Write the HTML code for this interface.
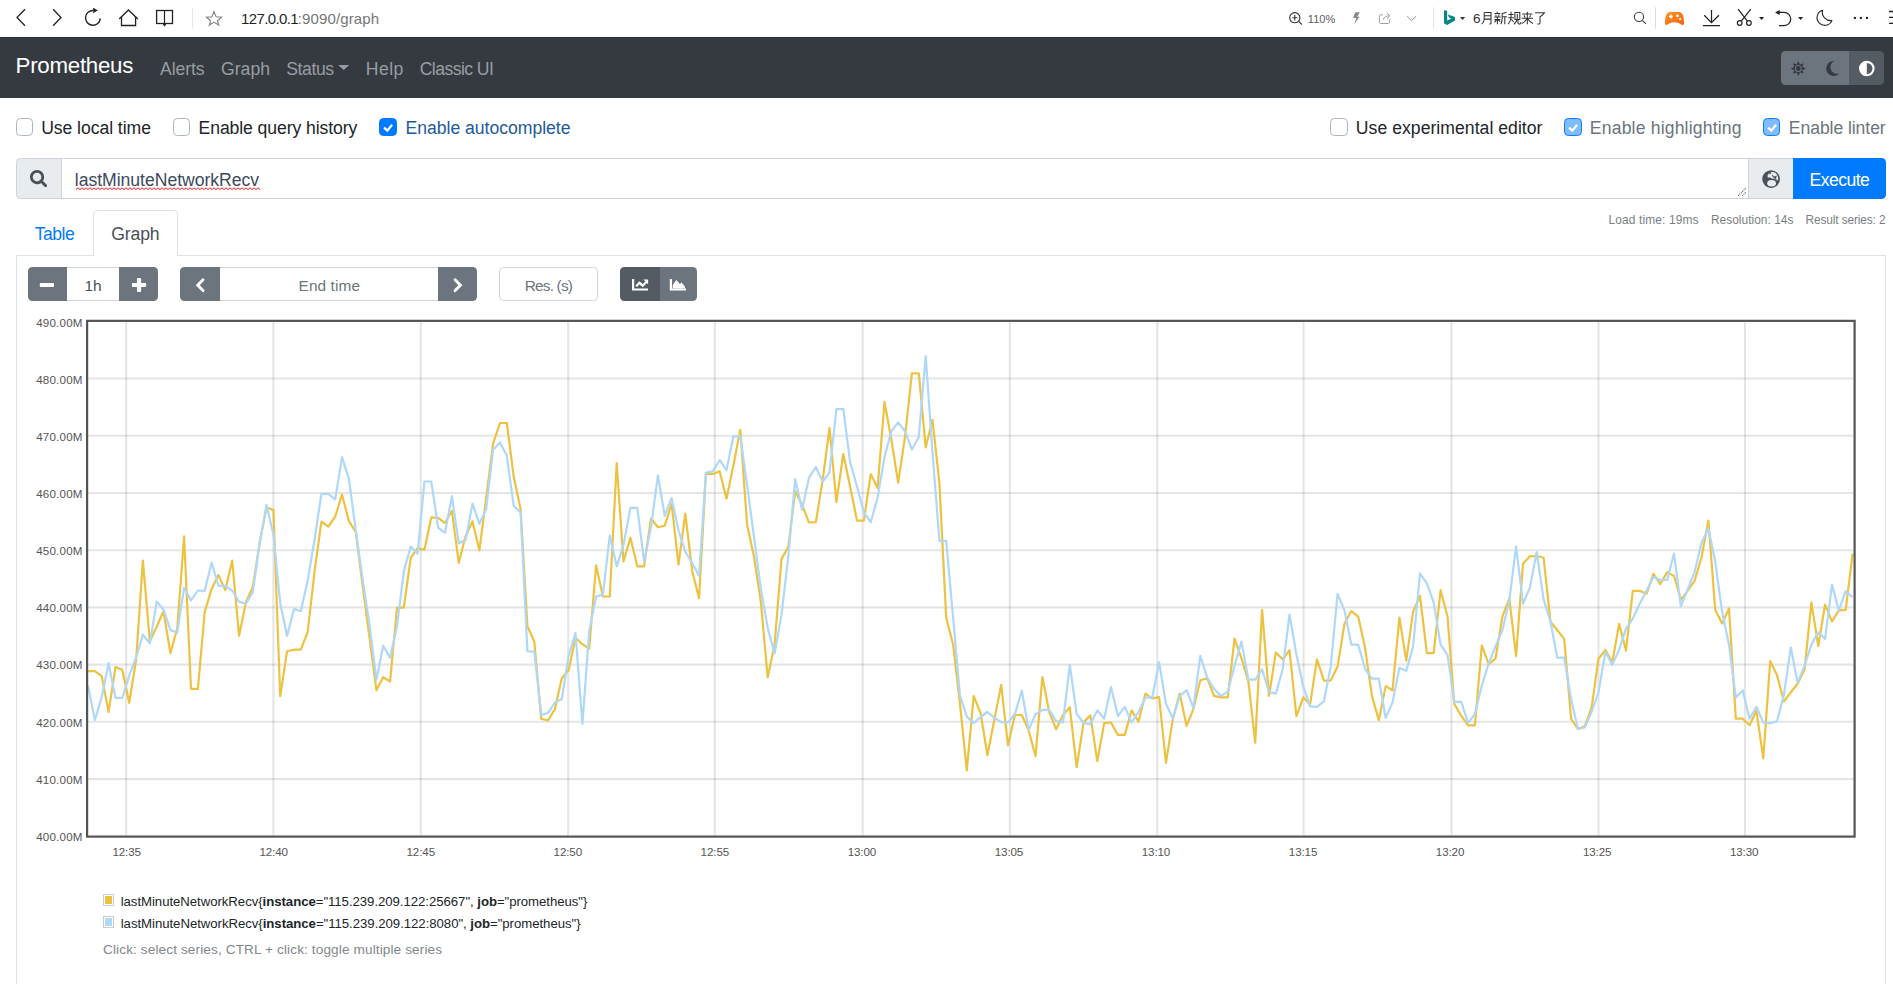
<!DOCTYPE html>
<html lang="en">
<head>
<meta charset="utf-8">
<title>Prometheus Time Series Collection and Processing Server</title>
<style>
html,body{margin:0;padding:0;background:#fff;}
body{width:1893px;height:984px;overflow:hidden;position:relative;font-family:"Liberation Sans",sans-serif;}
.abs{position:absolute;}
.t{position:absolute;white-space:nowrap;line-height:1;font-family:"Liberation Sans",sans-serif;}
.t b{font-weight:bold;}
#chrome{position:absolute;left:0;top:0;width:1893px;height:37px;background:#fff;}
#navbar{position:absolute;left:0;top:37px;width:1893px;height:60.6px;background:#343a40;}
.cb{position:absolute;top:118px;width:18px;height:18px;box-sizing:border-box;border:1px solid #adb5bd;border-radius:4.4px;background:#fff;}
.cb.on{background:#007bff;border-color:#007bff;}
.cb.dis{background:#80bdff;border-color:#0a80ff;}
.btn{position:absolute;background:#6c757d;box-sizing:border-box;}
.btn.act{background:#545b62;}
.inp{position:absolute;background:#fff;box-sizing:border-box;border:1px solid #ced4da;}
</style>
</head>
<body>

<!-- ================= browser chrome ================= -->
<div id="chrome">
<svg class="abs" style="left:0;top:0" width="1893" height="37" viewBox="0 0 1893 37" fill="none">
  <!-- back / forward -->
  <polyline points="25,9.2 17,17.5 25,25.800" stroke="#222" stroke-width="1.3"/>
  <polyline points="53.1,9.2 61,17.5 53.1,25.800" stroke="#222" stroke-width="1.3"/>
  <!-- reload -->
  <path d="M100.3 18.4A7.4 7.4 0 1 1 93.4 10.45" stroke="#222" stroke-width="1.4"/>
  <path d="M93.1 7.7L97.800 10.3L93.3 13.2Z" fill="#222"/>
  <!-- home -->
  <polyline points="119.2,19 128.45,10 137.800,19" stroke="#222" stroke-width="1.3"/>
  <polyline points="121.5,16.8 121.5,25.5 135.6,25.5 135.6,16.8" stroke="#222" stroke-width="1.3"/>
  <!-- reading view (book) -->
  <rect x="156.6" y="10.5" width="15.9" height="13" stroke="#222" stroke-width="1.3"/>
  <path d="M164.5 10.5V25.7M163.3 24L164.5 25.700L165.700 24" stroke="#222" stroke-width="1.2"/>
  <!-- divider -->
  <path d="M192.5 7.3V28.7" stroke="#e8e8e8" stroke-width="1"/>
  <!-- star -->
  <path d="M214 11.6L216.1 16.7L221.6 17.1L217.4 20.7L218.7 25.1L214 22.1L209.3 25.1L210.6 20.7L206.4 17.1L211.9 16.7Z" stroke="#858585" stroke-width="1.15"/>
  <!-- zoom magnifier -->
  <circle cx="1294.8" cy="17.7" r="5.1" stroke="#333" stroke-width="1.1"/>
  <path d="M1298.6 21.4L1301.8 24.5M1292.3 17.7H1297.3M1294.8 15.1V20.4" stroke="#333" stroke-width="1.1"/>
  <!-- lightning -->
  <path d="M1355.2 12.2H1359.9L1357.3 16.7H1359.6L1354.2 24.3L1356.3 17.9H1353.1Z" fill="#8c8c8c"/>
  <!-- share -->
  <path d="M1383 14.8H1380.6Q1379.4 14.8 1379.4 16V22.3Q1379.4 23.5 1380.6 23.5H1388.4Q1389.6 23.5 1389.6 22.3V19.6" stroke="#a0a0a0" stroke-width="1"/>
  <path d="M1383.3 19.8Q1383.8 15.9 1389.6 15.8M1387 13.1L1389.9 15.8L1387 18.6" stroke="#a0a0a0" stroke-width="1"/>
  <!-- chevron down -->
  <polyline points="1407.2,16.4 1411.5,20.7 1415.9,16.4" stroke="#8c8c8c" stroke-width="1"/>
  <!-- divider -->
  <path d="M1433.5 7.3V28.7" stroke="#e3e3e3" stroke-width="1"/>
  <!-- bing -->
  <path d="M1444 10L1447.2 11.1V20.6L1451.3 18.4L1449 17.4L1447.9 14.5L1455 17V20.6L1447.2 25L1444 23.2Z" fill="#0c8484"/>
  <path d="M1460 17.1H1465.2L1462.6 20Z" fill="#333"/>
  <!-- CJK text drawn as strokes: 月新规来了 -->
  <g stroke="#333" stroke-width="1.05" fill="none">
    <!-- 月 -->
    <path d="M1484.2 12.4H1491V23.2Q1491 24 1489.4 23.9M1484.2 12.4V19.5Q1484 22.6 1481.6 24M1484.2 15.7H1491M1484.2 19.1H1491"/>
    <!-- 新 -->
    <path d="M1497.2 11.8V13.2M1494.4 13.5H1500.4M1495.7 14.6L1496.3 16.4M1499.2 14.4L1498.5 16.4M1494.2 17H1500.6M1497.4 17V24.2M1497.2 19.2L1494.4 22.4M1497.6 19.4L1500.2 21.6M1494.4 19.6H1500.4"/>
    <path d="M1506.4 12.2Q1504.4 13.2 1502.2 13.5V18Q1502.2 22 1500.8 24.2M1502.2 16.8H1506.8M1504.8 16.8V24.3"/>
    <!-- 规 -->
    <path d="M1508.4 14.4H1513.6M1508.2 17.8H1513.8M1511 11.8V17.8Q1510.6 21.6 1508.2 24.1M1511.4 19.4L1513.6 22"/>
    <path d="M1514.9 12.5H1519.8V19.4H1514.9ZM1517.3 14V18Q1517 22 1513.9 24.2M1518 19.6V23Q1518 23.9 1519 23.9H1520.2Q1520.8 23.8 1520.9 22"/>
    <!-- 来 -->
    <path d="M1522.3 14H1532.4M1527.3 11.8V24.3M1524 15.3L1525 17.4M1530.6 15.2L1529.6 17.4M1521.6 18.3H1533.1M1527 18.6Q1525 22 1521.7 23.6M1527.6 18.6Q1529.6 22 1533 23.5"/>
    <!-- 了 -->
    <path d="M1535.2 12.8H1544.3Q1542.4 15.2 1540 16.8V22.9Q1540 24 1538.6 24H1537.3"/>
  </g>
  <!-- search -->
  <circle cx="1638.95" cy="16.9" r="4.6" stroke="#3a3a3a" stroke-width="1.1"/>
  <path d="M1642.3 20.3L1645.9 23.8" stroke="#3a3a3a" stroke-width="1.1"/>
  <path d="M1655.5 7.3V28.7" stroke="#dadada" stroke-width="1"/>
  <!-- gamepad -->
  <defs><linearGradient id="gp" x1="0" y1="0" x2="1" y2="1"><stop offset="0" stop-color="#fb9222"/><stop offset="1" stop-color="#f86512"/></linearGradient></defs>
  <path d="M1669.8 11.9H1679.7Q1682.3 12.6 1683.4 16.4L1684.2 22.5Q1684.3 25 1682.6 25Q1681.2 25 1679.6 23.6Q1674.5 21 1669.4 23.6Q1667.8 25 1666.4 25Q1664.7 25 1664.800 22.5L1665.6 16.4Q1666.8 12.6 1669.8 11.9Z" fill="url(#gp)"/>
  <path d="M1669 16.5H1673M1671 14.5V18.5" stroke="#fff" stroke-width="1.5"/>
  <circle cx="1677.5" cy="15.9" r="1.35" fill="#fff"/><rect x="1679.2" y="18.1" width="1.9" height="1.9" fill="#fff"/>
  <!-- download -->
  <path d="M1711.5 10V22.4M1704.2 15.2L1711.5 22.6L1718.9 15.2M1702.9 25.55H1720" stroke="#222" stroke-width="1.25"/>
  <!-- scissors -->
  <path d="M1738.1 9.1L1747.2 20.9M1750.8 9.1L1741.5 20.9" stroke="#222" stroke-width="1.25"/>
  <circle cx="1739.7" cy="23" r="2.3" stroke="#222" stroke-width="1.2"/><circle cx="1748.9" cy="23" r="2.3" stroke="#222" stroke-width="1.2"/>
  <path d="M1759 17H1764.1L1761.55 19.9Z" fill="#222"/>
  <!-- undo -->
  <path d="M1779 12.45H1784.2A6.55 6.55 0 0 1 1784.2 25.55H1779" stroke="#222" stroke-width="1.25"/>
  <path d="M1775 12.45L1779.7 9.9V15Z" fill="#222"/>
  <path d="M1798 17H1803.1L1800.55 19.9Z" fill="#222"/>
  <!-- moon -->
  <path d="M1822.5 10.3A7.7 7.7 0 1 0 1831.9 20.6A8.6 8.6 0 0 1 1822.5 10.3Z" stroke="#2a2a2a" stroke-width="1.15" stroke-linejoin="round"/>
  <!-- more -->
  <rect x="1853.8" y="16.9" width="2.1" height="2.1" fill="#222"/><rect x="1859.8" y="16.9" width="2.1" height="2.1" fill="#222"/><rect x="1865.9" y="16.9" width="2.1" height="2.1" fill="#222"/>
  <!-- hamburger (clipped) -->
  <path d="M1889 11.5H1893M1889 17.45H1893M1889 23.35H1893" stroke="#222" stroke-width="1.3"/>
</svg>
</div>

<!-- ================= Prometheus navbar ================= -->
<div id="navbar">
  <div class="abs" style="left:0;top:0;width:1893px;height:1px;background:#2b3037;"></div>
  <!-- dropdown caret -->
  <svg class="abs" style="left:338px;top:27.3px" width="12" height="8" viewBox="0 0 12 8"><path d="M0.2 1H11.2L5.7 6Z" fill="#9a9da0"/></svg>
  <!-- theme toggle group -->
  <div class="abs" style="left:1781px;top:14px;width:68.2px;height:34px;background:#6c757d;border-radius:4.4px 0 0 4.4px;"></div>
  <div class="abs" style="left:1849.2px;top:14px;width:34.8px;height:34px;background:#545b62;border-radius:0 4.4px 4.4px 0;"></div>
  <svg class="abs" style="left:1781px;top:14px" width="103" height="34" viewBox="1781 51 103 34">
    <!-- sun -->
    <g fill="#343a40">
      <path d="M1798.3 61L1800 64.4L1803.6 63.2L1802.4 66.8L1805.8 68.5L1802.4 70.2L1803.6 73.8L1800 72.6L1798.3 76L1796.6 72.6L1793 73.8L1794.2 70.2L1790.8 68.5L1794.2 66.8L1793 63.2L1796.6 64.4Z"/>
    </g>
    <circle cx="1798.3" cy="68.5" r="3.5" fill="#6c757d"/>
    <circle cx="1798.3" cy="68.5" r="2.4" fill="#343a40"/>
    <!-- moon -->
    <path d="M1834.6 61A7.5 7.5 0 1 0 1839.4 73.4A6.4 6.4 0 0 1 1834.6 61Z" fill="#343a40"/>
    <!-- adjust (half circle) -->
    <circle cx="1866.8" cy="68.5" r="7.8" fill="#fff"/>
    <path d="M1866.8 62.9A5.6 5.6 0 0 1 1866.8 74.1Z" fill="#545b62"/>
  </svg>
</div>

<!-- ================= options row ================= -->
<div class="cb" style="left:16px;width:17px"></div>
<div class="cb" style="left:173px;width:17px"></div>
<div class="cb on" style="left:379px"><svg class="abs" style="left:-1px;top:-1px" width="18" height="18" viewBox="0 0 18 18"><path d="M5.1 9.6L8.3 12.6L13.1 6.7" stroke="#fff" stroke-width="2.2" fill="none"/></svg></div>
<div class="cb" style="left:1330px"></div>
<div class="cb dis" style="left:1564px"><svg class="abs" style="left:-1px;top:-1px" width="18" height="18" viewBox="0 0 18 18"><path d="M5.1 9.6L8.3 12.6L13.1 6.7" stroke="#fff" stroke-width="2.2" fill="none"/></svg></div>
<div class="cb dis" style="left:1763px;width:17px"><svg class="abs" style="left:-1px;top:-1px" width="18" height="18" viewBox="0 0 18 18"><path d="M5.1 9.6L8.3 12.6L13.1 6.7" stroke="#fff" stroke-width="2.2" fill="none"/></svg></div>

<!-- ================= query input group ================= -->
<div class="abs" style="left:16px;top:158.3px;width:46px;height:40.4px;box-sizing:border-box;background:#e9ecef;border:1px solid #ced4da;border-radius:4.4px 0 0 4.4px;"></div>
<svg class="abs" style="left:30px;top:169.6px" width="17.4" height="17.4" viewBox="0 0 512 512"><path fill="#495057" d="M505 442.7L405.3 343c-4.500-4.500-10.600-7-17-7H372c27.600-35.300 44-79.700 44-128C416 93.100 322.900 0 208 0S0 93.100 0 208s93.100 208 208 208c48.300 0 92.700-16.400 128-44v16.300c0 6.400 2.500 12.500 7 17l99.700 99.700c9.400 9.400 24.600 9.400 33.900 0l28.300-28.300c9.400-9.400 9.400-24.600 .1-34zM208 336c-70.700 0-128-57.200-128-128 0-70.700 57.200-128 128-128 70.700 0 128 57.200 128 128 0 70.700-57.200 128-128 128z"/></svg>
<div class="abs" style="left:61px;top:158.3px;width:1688px;height:40.4px;box-sizing:border-box;background:#fff;border:1px solid #ced4da;"></div>
<!-- spellcheck squiggle -->
<svg class="abs" style="left:75.5px;top:187.3px" width="185" height="4" viewBox="0 0 185 4"><path d="M0 2.6L2 0.8L4 2.6L6 0.8L8 2.6L10 0.8L12 2.6L14 0.8L16 2.6L18 0.8L20 2.6L22 0.8L24 2.6L26 0.8L28 2.6L30 0.8L32 2.6L34 0.8L36 2.6L38 0.8L40 2.6L42 0.8L44 2.6L46 0.8L48 2.6L50 0.8L52 2.6L54 0.8L56 2.6L58 0.8L60 2.6L62 0.8L64 2.6L66 0.8L68 2.6L70 0.8L72 2.6L74 0.8L76 2.6L78 0.8L80 2.6L82 0.8L84 2.6L86 0.8L88 2.6L90 0.8L92 2.6L94 0.8L96 2.6L98 0.8L100 2.6L102 0.8L104 2.6L106 0.8L108 2.6L110 0.8L112 2.6L114 0.8L116 2.6L118 0.8L120 2.6L122 0.8L124 2.6L126 0.8L128 2.6L130 0.8L132 2.6L134 0.8L136 2.6L138 0.8L140 2.6L142 0.8L144 2.6L146 0.8L148 2.6L150 0.8L152 2.6L154 0.8L156 2.6L158 0.8L160 2.6L162 0.8L164 2.6L166 0.8L168 2.6L170 0.8L172 2.6L174 0.8L176 2.6L178 0.8L180 2.6L182 0.8L184 2.6" stroke="#ff1a1a" stroke-width="1" fill="none"/></svg>
<!-- resize grip -->
<svg class="abs" style="left:1737px;top:187px" width="11" height="10" viewBox="0 0 11 10"><path d="M1.2 8.800L9 1.1M5.300 8.800L9 5.100" stroke="#5f5f5f" stroke-width="1.1" stroke-dasharray="1.100 0.800"/></svg>
<div class="abs" style="left:1748.3px;top:158.3px;width:45px;height:40.4px;box-sizing:border-box;background:#e9ecef;border:1px solid #ced4da;border-right:none;"></div>
<!-- globe -->
<svg class="abs" style="left:1762px;top:169.8px" width="18.2" height="18.2" viewBox="-9.1 -9.1 18.2 18.2">
  <circle cx="0" cy="0" r="8.85" fill="#495057"/>
  <path d="M-3.7 -3.3Q-2.9 -5.9 0.3 -7.2Q4 -7.6 5.9 -4.600Q7.5 -1.800 7.2 0.700L5.6 1.5L3.3 -0.3L0.600 -0.5L-1 -1.700L-3.300 -1.500Z" fill="#e9ecef"/>
  <ellipse cx="0.5" cy="4.2" rx="4.4" ry="3.25" fill="#e9ecef"/>
  <path d="M-1.700 -5L0 -6.200M1.200 -4L2.600 -1.900L5 -2.700L4 -0.800L5.400 0.400" stroke="#495057" stroke-width="1.1" fill="none"/>
</svg>
<div class="abs" style="left:1793px;top:158.3px;width:93.2px;height:40.4px;background:#007bff;border-radius:0 4.4px 4.4px 0;"></div>

<!-- ================= tabs + panel ================= -->
<div class="abs" style="left:16px;top:255px;width:1870px;height:740px;box-sizing:border-box;border:1px solid #dee2e6;border-bottom:none;"></div>
<div class="abs" style="left:93px;top:210px;width:85px;height:46px;box-sizing:border-box;border:1px solid #dee2e6;border-bottom:none;border-radius:4.4px 4.4px 0 0;background:#fff;"></div>

<!-- range controls -->
<div class="btn" style="left:28.2px;top:267.1px;width:38.8px;height:33.8px;border-radius:4.4px 0 0 4.4px;"></div>
<div class="inp" style="left:67px;top:267.1px;width:52.2px;height:33.8px;border-left:none;border-right:none;"></div>
<div class="btn" style="left:119.2px;top:267.1px;width:38.6px;height:33.8px;border-radius:0 4.4px 4.4px 0;"></div>
<svg class="abs" style="left:28px;top:267px" width="131" height="34" viewBox="28 267 131 34">
  <rect x="39.8" y="282.9" width="14.2" height="4.2" rx="1" fill="#fff"/>
  <rect x="131.9" y="282.9" width="14.3" height="4.2" rx="1" fill="#fff"/><rect x="136.95" y="278" width="4.2" height="14.1" rx="1" fill="#fff"/>
</svg>

<!-- end-time controls -->
<div class="btn" style="left:180.1px;top:267.1px;width:39.8px;height:33.8px;border-radius:4.4px 0 0 4.4px;"></div>
<div class="inp" style="left:219.9px;top:267.1px;width:218px;height:33.8px;border-left:none;border-right:none;"></div>
<div class="btn" style="left:437.9px;top:267.1px;width:39px;height:33.8px;border-radius:0 4.4px 4.4px 0;"></div>
<svg class="abs" style="left:180px;top:267px" width="298" height="34" viewBox="180 267 298 34">
  <polyline points="203,279.700 197.700,285.15 203,290.600" stroke="#fff" stroke-width="2.9" fill="none" stroke-linecap="round" stroke-linejoin="miter"/>
  <polyline points="455.100,279.700 460.400,285.15 455.100,290.600" stroke="#fff" stroke-width="2.9" fill="none" stroke-linecap="round" stroke-linejoin="miter"/>
</svg>

<!-- resolution input -->
<div class="inp" style="left:499.4px;top:267.1px;width:98.4px;height:33.8px;border-radius:4.4px;"></div>

<!-- chart type buttons -->
<div class="btn act" style="left:619.8px;top:267.1px;width:40px;height:33.8px;border-radius:4.4px 0 0 4.4px;"></div>
<div class="btn" style="left:659.8px;top:267.1px;width:37.2px;height:33.8px;border-radius:0 4.4px 4.4px 0;"></div>
<svg class="abs" style="left:620px;top:267px" width="78" height="34" viewBox="620 267 78 34">
  <!-- line chart icon -->
  <path d="M633.1 279V289.500H648" stroke="#fff" stroke-width="2.2" fill="none"/>
  <polyline points="636.2,286.2 639.400,282.800 642.800,285.700 646.500,281.700" stroke="#fff" stroke-width="2.4" fill="none"/>
  <path d="M643.4 279.5H648.1V284.2Z" fill="#fff"/>
  <!-- area chart icon -->
  <path d="M670.900 279V289.500H686" stroke="#fff" stroke-width="2.2" fill="none"/>
  <path d="M672.700 288.4V284.900L676.300 280L679.900 284L681.600 282.500L685 286.700V288.4Z" fill="#fff"/>
</svg>

<!-- ================= chart ================= -->
<svg class="abs" style="left:0;top:300px" width="1893" height="560" viewBox="0 300 1893 560">
<path d="M126.2 322.0V835.5M273.4 322.0V835.5M420.8 322.0V835.5M568.2 322.0V835.5M714.8 322.0V835.5M862.7 322.0V835.5M1009.9 322.0V835.5M1157.3 322.0V835.5M1303.6 322.0V835.5M1451.5 322.0V835.5M1598.5 322.0V835.5M1745.0 322.0V835.5" stroke="rgba(0,0,0,0.1)" stroke-width="2.1" fill="none"/>
<path d="M88.0 378.5H1853.5M88.0 435.7H1853.5M88.0 493.0H1853.5M88.0 550.2H1853.5M88.0 607.4H1853.5M88.0 664.6H1853.5M88.0 721.8H1853.5M88.0 779.1H1853.5" stroke="rgba(0,0,0,0.1)" stroke-width="2.1" fill="none"/>
<polyline points="88.0,671.1 94.9,671.1 101.7,676.1 108.6,712.0 115.5,667.1 122.3,669.7 129.2,702.8 136.1,660.0 142.9,560.6 149.8,641.2 156.7,626.7 163.5,611.3 170.4,653.1 177.3,628.0 184.1,536.3 191.0,688.8 197.9,688.8 204.7,612.1 211.6,588.9 218.5,575.1 225.3,590.2 232.2,560.6 239.1,635.9 245.9,602.1 252.8,587.0 259.6,543.4 266.5,507.7 273.4,509.9 280.2,696.2 287.1,651.2 294.0,649.7 300.8,649.7 307.7,632.0 314.6,571.2 321.4,521.6 328.3,526.7 335.2,516.6 342.0,494.5 348.9,521.2 355.8,531.9 362.6,585.6 369.5,637.6 376.4,690.2 383.2,677.2 390.1,681.5 397.0,607.7 403.8,607.7 410.7,557.9 417.6,548.2 424.4,549.8 431.3,517.3 438.2,517.9 445.0,523.1 451.9,510.8 458.8,562.8 465.6,536.1 472.5,521.2 479.4,550.4 486.2,497.8 493.1,443.5 500.0,423.0 506.8,423.0 513.7,476.6 520.6,509.2 527.4,626.2 534.3,641.5 541.2,718.8 548.0,720.5 554.9,709.1 561.8,678.3 568.6,670.2 575.5,637.8 582.4,644.3 589.2,648.5 596.1,565.3 602.9,596.5 609.8,596.5 616.7,463.2 623.5,561.4 630.4,537.7 637.3,566.3 644.1,566.3 651.0,518.5 657.9,527.3 664.7,525.7 671.6,503.9 678.5,564.7 685.3,513.6 692.2,571.2 699.1,598.2 705.9,474.0 712.8,474.0 719.7,471.4 726.5,498.7 733.4,465.5 740.3,429.8 747.1,524.7 754.0,556.5 760.9,602.1 767.7,677.5 774.6,644.3 781.5,559.1 788.3,546.8 795.2,490.9 802.1,504.8 808.9,522.3 815.8,522.2 822.7,480.0 829.5,427.9 836.4,502.1 843.3,453.9 850.1,486.5 857.0,520.6 863.9,520.6 870.7,474.1 877.6,488.1 884.5,401.9 891.3,439.3 898.2,482.6 905.1,436.1 911.9,373.3 918.8,373.3 925.7,447.4 932.5,419.8 939.4,483.2 946.2,617.8 953.1,644.5 960.0,703.8 966.8,770.5 973.7,696.1 980.6,713.0 987.4,755.2 994.3,720.1 1001.2,684.9 1008.0,745.5 1014.9,715.0 1021.8,715.0 1028.6,730.2 1035.5,756.3 1042.4,677.0 1049.2,712.0 1056.1,729.2 1063.0,715.0 1069.8,707.3 1076.7,767.2 1083.6,722.1 1090.4,715.4 1097.3,761.1 1104.2,723.1 1111.0,722.5 1117.9,734.9 1124.8,734.9 1131.6,710.3 1138.5,721.7 1145.4,693.7 1152.2,698.3 1159.1,697.1 1166.0,762.8 1172.8,719.1 1179.7,693.5 1186.6,725.9 1193.4,709.1 1200.3,680.2 1207.2,678.2 1214.0,695.9 1220.9,697.3 1227.8,697.3 1234.6,638.5 1241.5,658.3 1248.4,681.6 1255.2,742.6 1262.1,609.9 1269.0,695.9 1275.8,652.6 1282.7,659.3 1289.5,650.1 1296.4,716.2 1303.3,697.3 1310.1,704.4 1317.0,659.3 1323.9,680.6 1330.7,680.6 1337.6,666.4 1344.5,623.7 1351.3,611.1 1358.2,616.6 1365.1,648.1 1371.9,695.9 1378.8,720.2 1385.7,686.1 1392.5,690.4 1399.4,617.6 1406.3,660.7 1413.1,611.8 1420.0,595.8 1426.9,653.2 1433.7,653.2 1440.6,590.2 1447.5,616.5 1454.3,704.0 1461.2,715.7 1468.1,725.3 1474.9,725.3 1481.8,645.3 1488.7,664.1 1495.5,658.7 1502.4,616.5 1509.3,598.7 1516.1,656.0 1523.0,563.7 1529.9,556.3 1536.7,556.0 1543.6,557.8 1550.5,621.8 1557.3,630.3 1564.2,638.9 1571.1,718.9 1577.9,729.0 1584.8,726.4 1591.7,707.2 1598.5,658.7 1605.4,650.0 1612.3,662.4 1619.1,623.9 1626.0,650.6 1632.8,590.8 1639.7,590.8 1646.6,593.7 1653.4,573.8 1660.3,584.1 1667.2,572.1 1674.0,576.0 1680.9,599.8 1687.8,590.6 1694.6,580.8 1701.5,557.5 1708.4,520.6 1715.2,609.8 1722.1,623.6 1729.0,608.5 1735.8,718.7 1742.7,718.7 1749.6,725.3 1756.4,710.7 1763.3,758.3 1770.2,661.1 1777.0,675.1 1783.9,701.5 1790.8,692.3 1797.6,683.8 1804.5,669.8 1811.4,602.4 1818.2,646.0 1825.1,604.6 1832.0,621.5 1838.8,610.4 1845.7,609.8 1852.6,553.6" fill="none" stroke="#edc240" stroke-width="2.2" stroke-linejoin="round"/>
<polyline points="88.0,685.6 94.9,720.0 101.7,697.2 108.6,663.1 115.5,698.0 122.3,698.0 129.2,675.6 136.1,657.6 142.9,634.6 149.8,643.3 156.7,601.6 163.5,609.5 170.4,630.1 177.3,632.5 184.1,587.8 191.0,600.5 197.9,590.5 204.7,591.0 211.6,562.5 218.5,585.7 225.3,586.2 232.2,590.5 239.1,601.6 245.9,603.7 252.8,592.3 259.6,543.4 266.5,505.1 273.4,534.2 280.2,602.9 287.1,635.9 294.0,609.0 300.8,611.3 307.7,580.4 314.6,539.5 321.4,493.8 328.3,493.8 335.2,499.4 342.0,457.1 348.9,478.9 355.8,530.3 362.6,579.1 369.5,624.6 376.4,679.8 383.2,645.7 390.1,657.7 397.0,626.2 403.8,571.6 410.7,546.5 417.6,553.7 424.4,481.5 431.3,481.5 438.2,527.7 445.0,532.9 451.9,496.2 458.8,543.3 465.6,540.0 472.5,503.6 479.4,523.8 486.2,509.2 493.1,449.7 500.0,442.5 506.8,455.5 513.7,505.9 520.6,512.4 527.4,651.5 534.3,651.5 541.2,714.9 548.0,713.0 554.9,702.6 561.8,699.1 568.6,655.6 575.5,632.9 582.4,724.0 589.2,631.3 596.1,596.5 602.9,594.6 609.8,535.4 616.7,566.3 623.5,545.2 630.4,507.8 637.3,507.8 644.1,561.4 651.0,527.3 657.9,475.3 664.7,515.9 671.6,498.0 678.5,530.5 685.3,551.7 692.2,563.0 699.1,576.0 705.9,472.7 712.8,471.4 719.7,460.0 726.5,470.4 733.4,436.3 740.3,436.3 747.1,485.0 754.0,537.0 760.9,589.1 767.7,628.1 774.6,653.4 781.5,615.1 788.3,556.5 795.2,479.2 802.1,509.8 808.9,477.9 815.8,467.0 822.7,481.6 829.5,472.5 836.4,409.1 843.3,409.1 850.1,462.1 857.0,486.5 863.9,512.5 870.7,522.2 877.6,497.8 884.5,457.2 891.3,431.2 898.2,422.4 905.1,431.2 911.9,449.7 918.8,437.0 925.7,356.4 932.5,452.3 939.4,540.8 946.2,540.8 953.1,617.7 960.0,695.7 966.8,716.6 973.7,723.1 980.6,717.0 987.4,712.0 994.3,717.6 1001.2,722.1 1008.0,722.5 1014.9,714.0 1021.8,690.6 1028.6,729.8 1035.5,714.4 1042.4,709.9 1049.2,709.9 1056.1,721.1 1063.0,722.5 1069.8,664.8 1076.7,714.0 1083.6,723.1 1090.4,724.1 1097.3,710.5 1104.2,718.7 1111.0,687.0 1117.9,716.0 1124.8,706.9 1131.6,722.5 1138.5,712.0 1145.4,697.7 1152.2,697.7 1159.1,662.2 1166.0,703.8 1172.8,718.4 1179.7,696.0 1186.6,690.2 1193.4,708.0 1200.3,655.8 1207.2,677.6 1214.0,688.7 1220.9,695.9 1227.8,691.8 1234.6,665.4 1241.5,641.6 1248.4,679.6 1255.2,679.6 1262.1,669.4 1269.0,691.8 1275.8,693.8 1282.7,669.4 1289.5,614.6 1296.4,654.2 1303.3,686.7 1310.1,706.4 1317.0,707.0 1323.9,701.3 1330.7,666.4 1337.6,593.8 1344.5,610.5 1351.3,644.6 1358.2,644.6 1365.1,668.8 1371.9,678.6 1378.8,678.6 1385.7,717.8 1392.5,702.6 1399.4,667.8 1406.3,670.9 1413.1,646.2 1420.0,573.3 1426.9,583.4 1433.7,602.6 1440.6,644.6 1447.5,654.9 1454.3,701.9 1461.2,701.9 1468.1,722.8 1474.9,714.0 1481.8,685.8 1488.7,663.4 1495.5,646.4 1502.4,630.3 1509.3,600.5 1516.1,546.4 1523.0,603.7 1529.9,587.6 1536.7,552.0 1543.6,599.4 1550.5,621.8 1557.3,657.7 1564.2,657.7 1571.1,698.7 1577.9,729.0 1584.8,727.5 1591.7,711.5 1598.5,692.3 1605.4,652.1 1612.3,664.9 1619.1,649.6 1626.0,628.6 1632.8,618.6 1639.7,603.7 1646.6,590.8 1653.4,576.9 1660.3,580.1 1667.2,580.0 1674.0,553.6 1680.9,606.4 1687.8,589.2 1694.6,572.1 1701.5,543.0 1708.4,528.5 1715.2,561.5 1722.1,611.7 1729.0,644.7 1735.8,697.5 1742.7,690.4 1749.6,718.7 1756.4,706.8 1763.3,722.6 1770.2,723.2 1777.0,721.3 1783.9,694.9 1790.8,647.3 1797.6,683.0 1804.5,665.8 1811.4,644.7 1818.2,632.3 1825.1,638.9 1832.0,584.5 1838.8,610.4 1845.7,591.1 1852.6,597.2" fill="none" stroke="#afd8f8" stroke-width="2.2" stroke-linejoin="round"/>
<rect x="87.1" y="320.85" width="1767.5" height="515.75" fill="none" stroke="#545454" stroke-width="2.2"/>
</svg>

<!-- ================= legend ================= -->
<div class="abs" style="left:103px;top:894px;width:11px;height:12px;box-sizing:border-box;border:1px solid #ccc;background:#fff;"><div class="abs" style="left:1px;top:1px;width:7px;height:8px;background:#edc240;"></div></div>
<div class="abs" style="left:103px;top:916px;width:11px;height:12px;box-sizing:border-box;border:1px solid #ccc;background:#fff;"><div class="abs" style="left:1px;top:1px;width:7px;height:8px;background:#afd8f8;"></div></div>

<!-- ================= text ================= -->
<span class="t" id="t0" style="left:241.06px;top:11.00px;font-size:15.00px;color:#1f1f1f;letter-spacing:-0.611px;">127.0.0.1</span>
<span class="t" id="t1" style="left:297.63px;top:11.00px;font-size:15.00px;color:#767676;letter-spacing:0.147px;">:9090/graph</span>
<span class="t" id="t2" style="left:1307.86px;top:14.00px;font-size:11.00px;color:#5c5c5c;letter-spacing:0.001px;">110%</span>
<span class="t" id="t3" style="left:1473.01px;top:12.00px;font-size:13.50px;color:#333;letter-spacing:0.000px;">6</span>
<span class="t" id="t4" style="left:15.57px;top:55.00px;font-size:22.30px;color:#ffffff;letter-spacing:-0.265px;">Prometheus</span>
<span class="t" id="t5" style="left:159.97px;top:61.00px;font-size:17.60px;color:#9a9da0;letter-spacing:-0.063px;">Alerts</span>
<span class="t" id="t6" style="left:221.11px;top:61.00px;font-size:17.60px;color:#9a9da0;letter-spacing:-0.020px;">Graph</span>
<span class="t" id="t7" style="left:286.20px;top:61.00px;font-size:17.60px;color:#9a9da0;letter-spacing:-0.391px;">Status</span>
<span class="t" id="t8" style="left:365.86px;top:61.00px;font-size:17.60px;color:#9a9da0;letter-spacing:0.398px;">Help</span>
<span class="t" id="t9" style="left:419.71px;top:61.00px;font-size:17.60px;color:#9a9da0;letter-spacing:-0.552px;">Classic UI</span>
<span class="t" id="t10" style="left:41.14px;top:120.00px;font-size:17.60px;color:#212529;letter-spacing:-0.051px;">Use local time</span>
<span class="t" id="t11" style="left:198.56px;top:120.00px;font-size:17.60px;color:#212529;letter-spacing:-0.090px;">Enable query history</span>
<span class="t" id="t12" style="left:405.56px;top:120.00px;font-size:17.60px;color:#1d5a99;letter-spacing:-0.021px;">Enable autocomplete</span>
<span class="t" id="t13" style="left:1355.84px;top:120.00px;font-size:17.60px;color:#212529;letter-spacing:0.038px;">Use experimental editor</span>
<span class="t" id="t14" style="left:1589.86px;top:120.00px;font-size:17.60px;color:#6c757d;letter-spacing:0.165px;">Enable highlighting</span>
<span class="t" id="t15" style="left:1788.86px;top:120.00px;font-size:17.60px;color:#6c757d;letter-spacing:-0.081px;">Enable linter</span>
<span class="t" id="t16" style="left:74.81px;top:172.00px;font-size:17.60px;color:#3d4a5c;letter-spacing:-0.028px;">lastMinuteNetworkRecv</span>
<span class="t" id="t17" style="left:1809.46px;top:172.00px;font-size:17.60px;color:#ffffff;letter-spacing:-0.542px;">Execute</span>
<span class="t" id="t18" style="left:1608.62px;top:215.00px;font-size:11.90px;color:#7a7f85;letter-spacing:0.136px;">Load time: 19ms</span>
<span class="t" id="t19" style="left:1710.92px;top:215.00px;font-size:11.90px;color:#7a7f85;letter-spacing:0.038px;">Resolution: 14s</span>
<span class="t" id="t20" style="left:1805.62px;top:215.00px;font-size:11.90px;color:#7a7f85;letter-spacing:-0.132px;">Result series: 2</span>
<span class="t" id="t21" style="left:34.80px;top:226.00px;font-size:17.60px;color:#007bff;letter-spacing:-0.521px;">Table</span>
<span class="t" id="t22" style="left:111.31px;top:226.00px;font-size:17.60px;color:#495057;letter-spacing:-0.145px;">Graph</span>
<span class="t" id="t23" style="left:84.43px;top:278.00px;font-size:15.40px;color:#495057;letter-spacing:0.048px;">1h</span>
<span class="t" id="t24" style="left:298.54px;top:278.00px;font-size:15.40px;color:#6c757d;letter-spacing:0.100px;">End time</span>
<span class="t" id="t25" style="left:524.74px;top:278.00px;font-size:15.40px;color:#6c757d;letter-spacing:-0.808px;">Res. (s)</span>
<span class="t" id="t26" style="left:36.13px;top:317.00px;font-size:11.60px;color:#545454;letter-spacing:0.199px;">490.00M</span>
<span class="t" id="t27" style="left:36.13px;top:374.00px;font-size:11.60px;color:#545454;letter-spacing:0.199px;">480.00M</span>
<span class="t" id="t28" style="left:36.13px;top:431.00px;font-size:11.60px;color:#545454;letter-spacing:0.199px;">470.00M</span>
<span class="t" id="t29" style="left:36.13px;top:488.00px;font-size:11.60px;color:#545454;letter-spacing:0.199px;">460.00M</span>
<span class="t" id="t30" style="left:36.13px;top:545.00px;font-size:11.60px;color:#545454;letter-spacing:0.199px;">450.00M</span>
<span class="t" id="t31" style="left:36.13px;top:602.00px;font-size:11.60px;color:#545454;letter-spacing:0.199px;">440.00M</span>
<span class="t" id="t32" style="left:36.13px;top:659.00px;font-size:11.60px;color:#545454;letter-spacing:0.199px;">430.00M</span>
<span class="t" id="t33" style="left:36.13px;top:717.00px;font-size:11.60px;color:#545454;letter-spacing:0.199px;">420.00M</span>
<span class="t" id="t34" style="left:36.13px;top:774.00px;font-size:11.60px;color:#545454;letter-spacing:0.199px;">410.00M</span>
<span class="t" id="t35" style="left:36.13px;top:831.00px;font-size:11.60px;color:#545454;letter-spacing:0.199px;">400.00M</span>
<span class="t" id="t36" style="left:112.42px;top:846.00px;font-size:11.60px;color:#545454;letter-spacing:-0.111px;">12:35</span>
<span class="t" id="t37" style="left:259.47px;top:846.00px;font-size:11.60px;color:#545454;letter-spacing:-0.120px;">12:40</span>
<span class="t" id="t38" style="left:406.52px;top:846.00px;font-size:11.60px;color:#545454;letter-spacing:-0.111px;">12:45</span>
<span class="t" id="t39" style="left:553.57px;top:846.00px;font-size:11.60px;color:#545454;letter-spacing:-0.120px;">12:50</span>
<span class="t" id="t40" style="left:700.62px;top:846.00px;font-size:11.60px;color:#545454;letter-spacing:-0.111px;">12:55</span>
<span class="t" id="t41" style="left:847.67px;top:846.00px;font-size:11.60px;color:#545454;letter-spacing:-0.120px;">13:00</span>
<span class="t" id="t42" style="left:994.72px;top:846.00px;font-size:11.60px;color:#545454;letter-spacing:-0.111px;">13:05</span>
<span class="t" id="t43" style="left:1141.77px;top:846.00px;font-size:11.60px;color:#545454;letter-spacing:-0.120px;">13:10</span>
<span class="t" id="t44" style="left:1288.82px;top:846.00px;font-size:11.60px;color:#545454;letter-spacing:-0.111px;">13:15</span>
<span class="t" id="t45" style="left:1435.87px;top:846.00px;font-size:11.60px;color:#545454;letter-spacing:-0.120px;">13:20</span>
<span class="t" id="t46" style="left:1582.92px;top:846.00px;font-size:11.60px;color:#545454;letter-spacing:-0.111px;">13:25</span>
<span class="t" id="t47" style="left:1729.97px;top:846.00px;font-size:11.60px;color:#545454;letter-spacing:-0.120px;">13:30</span>
<span class="t" id="t48" style="left:120.71px;top:895.00px;font-size:13.20px;color:#212529;letter-spacing:-0.047px;">lastMinuteNetworkRecv{<b>instance</b>=&quot;115.239.209.122:25667&quot;, <b>job</b>=&quot;prometheus&quot;}</span>
<span class="t" id="t49" style="left:120.71px;top:917.00px;font-size:13.20px;color:#212529;letter-spacing:-0.041px;">lastMinuteNetworkRecv{<b>instance</b>=&quot;115.239.209.122:8080&quot;, <b>job</b>=&quot;prometheus&quot;}</span>
<span class="t" id="t50" style="left:103.01px;top:943.00px;font-size:13.60px;color:#82878c;letter-spacing:0.119px;">Click: select series, CTRL + click: toggle multiple series</span>

</body>
</html>
